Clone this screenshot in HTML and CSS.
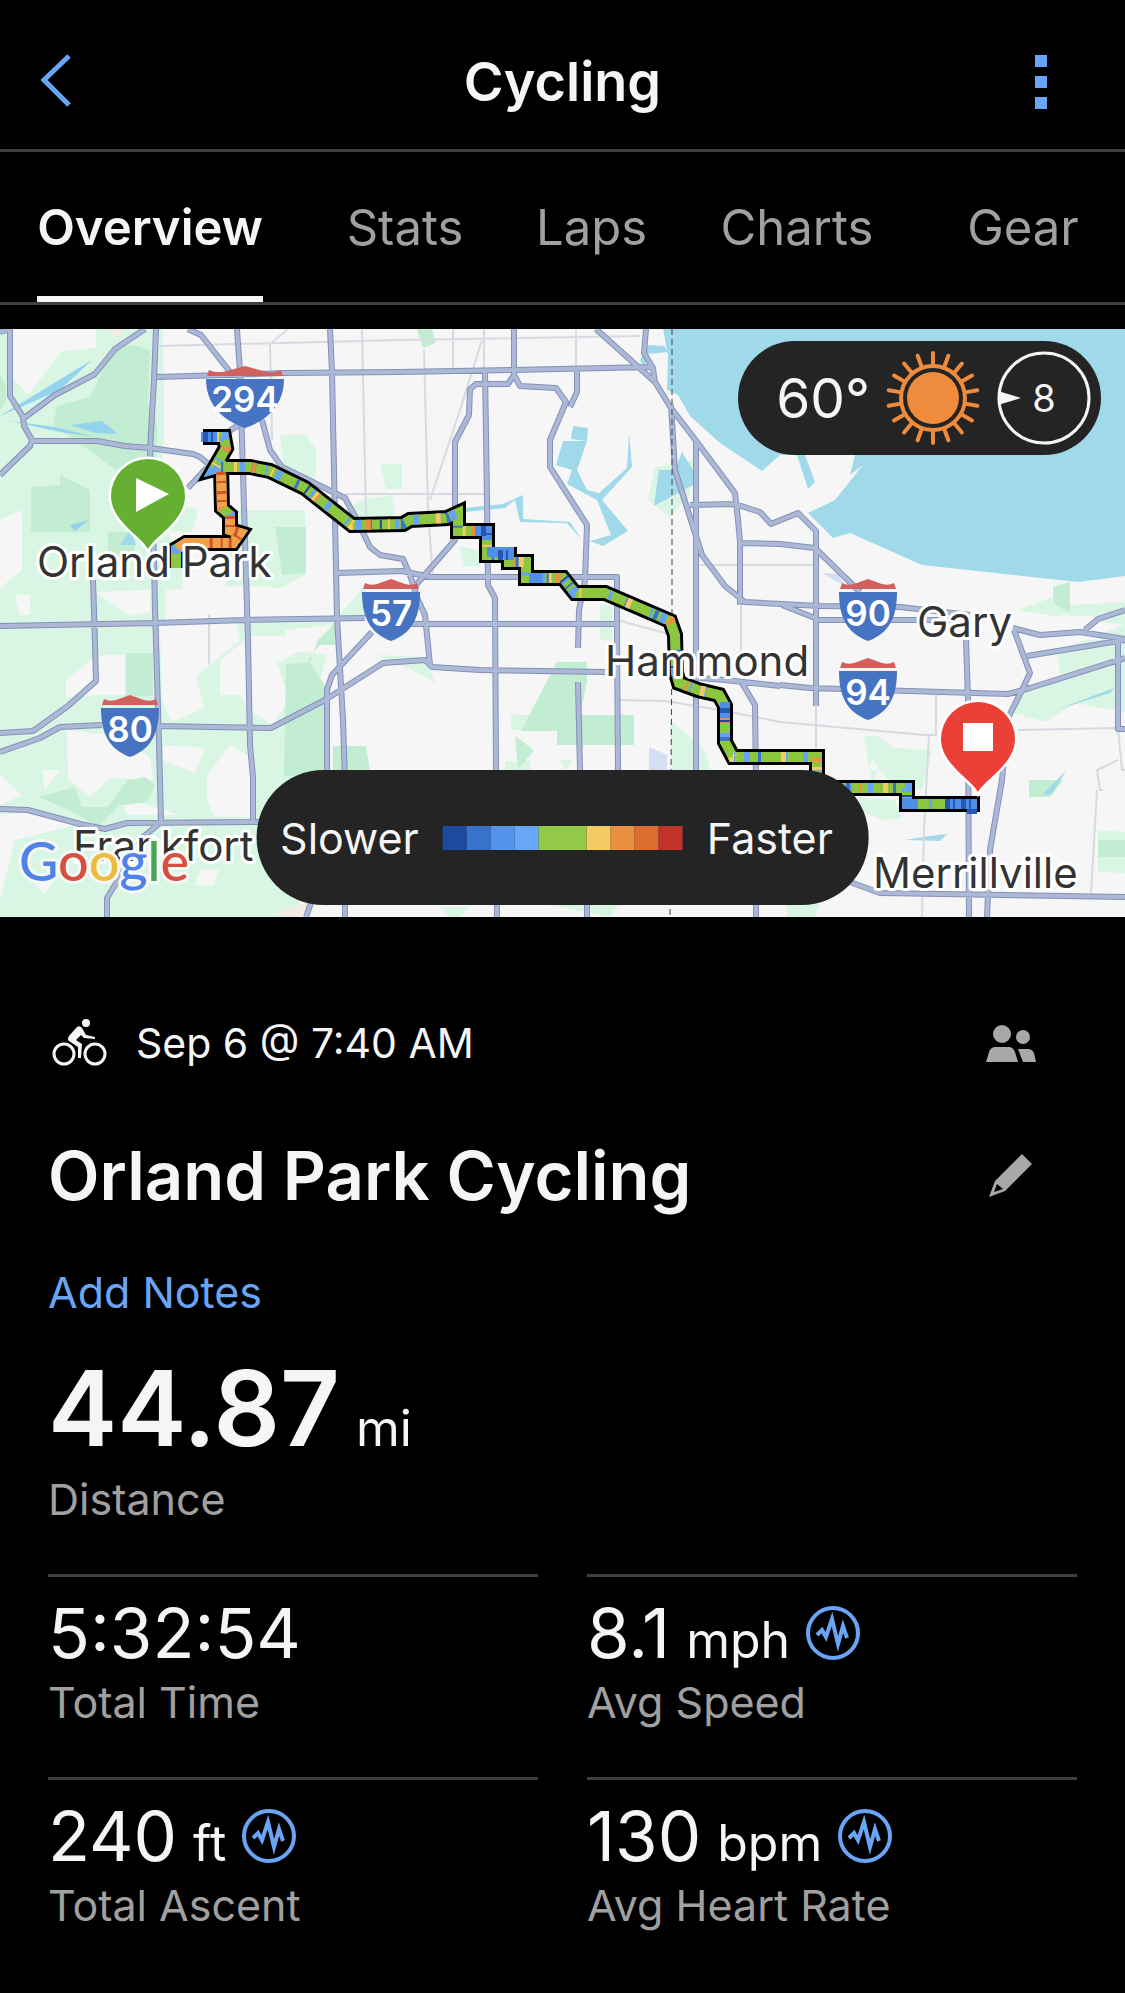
FILE: index.html
```html
<!DOCTYPE html>
<html lang="en">
<head>
  <meta charset="utf-8">
  <meta name="viewport" content="width=device-width, initial-scale=1">
  <title>Cycling</title>
  <link rel="stylesheet" href="styles.css">
</head>
<body>
  <header class="topbar">
    <button type="button" class="icon-button back" aria-label="Back">
      <svg width="32" height="54" viewBox="0 0 32 54"><path d="M29 2 L4 26 L29 51"/></svg>
    </button>
    <h1>Cycling</h1>
    <button type="button" class="icon-button more" aria-label="More">
      <svg width="12" height="56" viewBox="0 0 12 56"><path d="M0 2h12v12H0zM0 23h12v12H0zM0 44h12v12H0z"/></svg>
    </button>
  </header>

  <nav class="tabs">
    <a href="#overview" class="active" aria-current="page">Overview</a>
    <a href="#stats">Stats</a>
    <a href="#laps">Laps</a>
    <a href="#charts">Charts</a>
    <a href="#gear">Gear</a>
  </nav>

  <section class="map">
    <svg class="map-canvas" viewBox="0 329 1125 588" role="img" aria-label="Route map">
      <defs>
        <path id="roads" d="M0 332 L10 329 V396 L23 417 L24 426 L32 440 L30 446 L0 475
          M145 329 L115 349 L95 374 L55 395 L24 418
          M32 441 H97 L125 446 L150 448 L193 454 L200 457 L212 467 M212 462 L188 488
          M156 329 L154 380 L150 450 L154 560 L155 610 L157 675 L159 743 L161 822 L142 838 L118 880 L107 898 V917
          M188 329 L201 335 L230 372 M237 329 L240 372 L242 440 L245 540 L248 640 L250 745 L253 777 V822
          M157 377 L285 373 L400 372 L513 370 L652 367 M240 424 L228 432
          M330 329 L332 372 L337 618 L343 720 L345 780 V917
          M262 420 L270 450 L282 467 L345 498 L357 520 L370 547 L380 555 L403 559 L410 575 L418 600 L425 615 L430 665
          M337 573 L402 571 L430 577 H617 V640 L618 770
          M93 580 L94 610 L96 681 L68 706 L33 731 L0 733
          M0 626 L155 623 L245 620 L365 618 M410 624 H617
          M0 752 L40 738 L60 727 L102 725 M157 726 L271 728 L325 700 L383 663 L425 660 L432 667 L480 670 L605 672 M780 686 L725 680 L700 678
          M372 632 L332 675 L327 690 V780 M312 900 L306 917
          M0 809 L28 810 L80 824 L105 829 L127 823 L260 822
          M514 329 V375 L508 384 H476 L470 389 L469 415 L455 442 V540 L415 586
          M514 375 L520 386 L556 388 L566 402 L550 440 V467 L587 525 L585 580 L579 610 L578 648 M578 682 L580 770 M587 890 V917
          M485 370 L487 500 L488 585 L495 598 L496 770 L497 917
          M577 368 V392 L570 407
          M596 329 L655 382 L671 408 L697 442 L735 493 L738 520 L740 542 V605
          M646 329 L644 353 L653 368 L655 384
          M671 405 L675 470 L702 555 L725 586 L745 602 L820 606 L900 607 L970 615
          M696 442 V780
          M690 505 L735 504 L760 512 L771 524 L798 513 L816 531 V706
          M741 543 L780 544 L815 548 M817 550 L860 592
          M782 605 L820 620 H960
          M742 683 L755 705 L756 780 M756 890 V917
          M780 685 L810 688 L1008 694 L1030 688 L1125 658
          M966 640 L968 700 L969 917
          M1013 628 L1040 635 L1080 632 L1125 639
          M1014 630 L1030 673 L1022 690 L1008 718 L1002 780 L990 850 L987 917
          M1027 656 L1125 640 M1085 630 L1098 619 L1125 610
          M1118 640 V729 H1125
          M850 882 L880 893 L1125 897"/>
        <path id="route" d="M203 437 H224 L226 448 L214 469 L221 467 L222 508 L230 515 V530 L240 533 L233 543 L186 543 L176 549 V568
          M221 467 H250 L270 471 L305 488 L352 525 L403 524 L410 520 L447 518 L458 513 V531 H487 V555 H509 V562 H526 V578 H563 L575 593 H605 L670 621 L675 635 L676 673 L679 683 L698 690 L719 695 L725 706 V742 L733 757 H817 V788 H907 V804 H972 V812"/>
        <path id="plate-top" d="M-26 -28 Q-21 -25 -14 -27 L0 -32 L14 -27 Q21 -25 26 -28 L28 -22 H-28z"/>
        <path id="plate" d="M-29 -19 H29 C29 5 22 22 0 30 C-22 22 -29 5 -29 -19z"/>
        <path id="pin" d="M0 53 C-7 40 -37 25 -37 0 A37 37 0 0 1 37 0 C37 25 7 40 0 53z"/>
      </defs>

      <rect class="land" x="0" y="329" width="1125" height="588"/>

      <g class="park">
        <path d="M0 329 H163 L165 470 L146 500 L200 504 L190 540 L180 600 L205 618 L336 618 L300 760 V917 H0z"/>
        <path d="M280 435 L305 434 L316 450 V490 L345 510 L362 500 L392 495 L395 515 L350 519 L285 480z"/>
        <path d="M380 464 H402 V489 H386z M235 510 H305 V575 L276 590 H225z M337 618 L365 585 V618z M460 546 L480 551 V566 H464z"/>
        <path d="M655 467 L693 460 L690 495 L670 517 L648 500z M670 720 L705 750 L712 775 H672z M511 715 H560 V730 H511z"/>
        <path d="M1018 610 L1053 597 V587 L1070 582 V605 L1125 602 V625 L1060 617z M1058 650 L1125 625 V712 L1075 703 L1046 722 L1008 712 L1025 690 L1060 680z"/>
        <path d="M864 736 H878 L893 748 L932 750 L922 790 L895 785 L878 770 L872 785z M858 797 L895 800 L902 818 L885 820 L860 812z M1098 830 L1125 832 V873 L1098 872z M787 905 L820 903 L815 917 H787z"/>
        <path d="M377 655 L425 657 L435 683 L412 670z M505 762 L530 760 V772 H505z M560 760 H572 L565 772z M440 907 H470 L460 917 H450z M550 905 L620 903 L610 917z M600 605 H612 V640 H600z"/>
      </g>

      <g class="land">
        <path d="M12 329 H96 V348 L62 351 L28 395 L10 375z M85 418 L125 425 V440 H95z M166 410 H260 V500 L200 510 L160 500z"/>
        <path d="M0 520 L22 510 V570 L0 588z M166 530 L212 535 L205 545 H175z M166 590 L240 586 L335 590 V617 L165 622z M95 592 L150 590 V612 L130 616z M15 595 H30 V615 H20z"/>
        <path d="M160 622 L235 618 L240 640 L196 676 L204 708 L172 722 L162 700z M220 660 L250 636 H295 L302 650 L277 663 L286 690 V705 L272 725 L250 710 L240 695 H220z"/>
        <path d="M106 655 H125 V695 H98 L66 697 V680 L90 660z M67 730 L110 735 L150 757 L153 780 L110 778 L90 797 L68 780z M163 745 L205 748 L195 773 L163 760z M207 775 L230 745 L250 757 V817 H215 L207 800z"/>
        <path d="M0 775 L22 795 L0 805z M0 815 L35 812 L75 825 L15 840 L0 900z M42 770 L60 770 L45 790z M124 805 L140 803 L180 815 H127z M200 870 L219 869 L214 885 H195z M30 878 L60 870 L45 895z"/>
        <path d="M285 630 L330 625 L336 632 L330 655 L285 650z M348 665 L395 672 V770 H370 L366 746 H345z M1060 615 L1100 617 V640 H1060z M869 770 L872 759 L880 772 H890z"/>
      </g>

      <g class="woods">
        <path d="M57 406 L90 397 L115 345 L137 346 L150 350 L148 405 L157 424 V471 L116 470 L75 440 L53 425z"/>
        <path d="M31 487 L60 485 L60 475 L90 490 V532 H31z M0 375 L6 385 V400 L0 410z M108 532 H135 V556 H108z M275 527 H306 V573 L282 575z"/>
        <path d="M126 653 H153 V696 H126z M286 664 L310 662 L318 640 L335 623 V645 H320 L308 660 L328 690 V776 H284z M333 746 H366 L370 770 H333z"/>
        <path d="M38 797 L75 787 L82 807 H108 L120 790 L128 780 L145 777 L155 785 L147 802 L120 805 L98 827 L73 812z"/>
        <path d="M417 329 H432 L436 343 L423 348z M557 662 H587 V682 L580 715 H634 V745 H557 V731 H521z M515 736 L534 750 L518 770z"/>
        <path d="M1053 597 V587 L1070 582 V612 L1055 605z M1098 840 H1125 V857 H1098z M1029 780 H1063 L1050 797 H1029z"/>
      </g>

      <g class="water">
        <path d="M663 329 L666 345 L668 355 L667 390 L678 395 L690 416 L720 443 L762 471 L780 455 H797 L808 489 L815 482 L805 455 H855 L850 475 L863 465 L835 500 L808 513 L833 538 L850 533 L922 565 L1078 582 L1125 576 V329z"/>
        <path d="M573 426 L588 428 L587 441 L571 439z M563 441 L587 441 L577 470 L587 490 L599 493 L627 468 L629 433 L632 467 L602 500 L628 531 L603 546 L590 541 L611 535 L597 500 L567 484 L572 470 L556 465z"/>
        <path d="M465 508 L503 504 L523 495 L523 519 L570 522 L582 540 L567 523 L520 522 L515 500 L505 508 L465 512z M659 470 L675 470 L682 452 L693 470 V485 L654 506z"/>
        <path d="M648 345 L664 346 L668 352 L648 354 L644 370 L640 360z"/>
        <path d="M905 840 L930 836 L947 834 L940 841z M1042 795 L1066 771 L1052 794z M1056 710 L1114 688 L1110 693z M120 545 L130 530 L136 545z"/>
      </g>
      <g class="stream">
        <path d="M0 416 L92 360 L60 390z M10 421 L55 427 L95 437 L60 432z M70 425 L102 421 L118 434 L95 433z M70 525 L89 520 L75 531z"/>
      </g>
      <path class="airport" d="M649 747 L667 755 V772 H649z M822 573 L838 574 L845 586z"/>
      <path class="sand" d="M106 329 H125 L117 337z M272 915 L308 902 L302 917z"/>

      <path class="minor-road" d="M160 346 L400 340 L640 336 M288 329 L270 344 L272 440 M362 329 L366 515 M424 350 L428 510 L433 580 M482 340 L460 410 L430 500 M453 329 V368 M484 329 V372 M576 329 V368
        M345 494 H486 M700 565 H815 M741 605 V660 M618 700 L665 701 L720 710 L780 722 L925 735 H936 V690 M929 735 L924 830 L922 917 M816 706 V757 M1018 730 L1118 728 L1122 770 H1125 M1118 760 L1097 770 L1100 790 H1103 M1097 790 L1091 893 M617 620 L680 637 M209 615 V665"/>

      <use href="#roads" class="road-edge"/>
      <use href="#roads" class="road"/>
      <path class="border" d="M672 329 V640 L670 917"/>

      <use href="#route" class="route-outline"/>
      <use href="#route" class="route"/>
      <use href="#route" class="route sky"/>
      <use href="#route" class="route blue"/>
      <use href="#route" class="route yellow"/>
      <use href="#route" class="route orange"/>
      <use href="#route" class="route navy"/>
      <!-- fast stretch near the start -->
      <path class="route hot" d="M221 472 L222 506 M230 516 V530 L240 533 L233 543 L186 543 L178 548"/>
      <path class="route hotter" d="M221 472 L222 506 M230 516 V530 L240 533 L233 543 L208 543"/>
      <!-- slow stretches -->
      <path class="route slow" d="M201 437 H217 M475 531 H487 V540 M487 552 H509 V560 M529 578 H542 M725 702 V718 M907 798 V804 H918 M945 804 H972 V812"/>
      <path class="route slower" d="M203 437 H217 M481 531 H487 V536 M498 555 H509 V560 M725 708 V716 M945 804 H972 V814"/>

      <g class="labels">
        <text x="37" y="577">Orland Park</text>
        <text x="605" y="676">Hammond</text>
        <text x="917" y="637">Gary</text>
        <text x="873" y="888">Merrillville</text>
        <text x="73" y="861">Frankfort</text>
      </g>

      <g class="shield">
        <g transform="translate(245 398)">
          <path class="plate-top" d="M-36 -28 Q-28 -24 -18 -27 L0 -32 L18 -27 Q28 -24 36 -28 L38 -22 H-38z"/>
          <path class="plate" d="M-39 -19 H39 C39 5 24 22 0 30 C-24 22 -39 5 -39 -19z"/>
          <text y="14">294</text>
        </g>
        <g transform="translate(130 727)"><use href="#plate-top" class="plate-top"/><use href="#plate" class="plate"/><text y="15">80</text></g>
        <g transform="translate(391 611)"><use href="#plate-top" class="plate-top"/><use href="#plate" class="plate"/><text y="15">57</text></g>
        <g transform="translate(868 611)"><use href="#plate-top" class="plate-top"/><use href="#plate" class="plate"/><text y="15">90</text></g>
        <g transform="translate(868 690)"><use href="#plate-top" class="plate-top"/><use href="#plate" class="plate"/><text y="15">94</text></g>
      </g>

      <g transform="translate(148 496)">
        <use href="#pin" class="pin start"/>
        <path class="pin-mark" d="M-12 -18 L21 -2 L-12 16z"/>
      </g>
      <g transform="translate(978 739)">
        <use href="#pin" class="pin end"/>
        <path class="pin-mark" d="M-15 -16 H15 V12 H-15z"/>
      </g>

      <text class="google" x="19" y="881"><tspan class="g-blue">G</tspan><tspan class="g-red">o</tspan><tspan class="g-yellow">o</tspan><tspan class="g-blue">g</tspan><tspan class="g-green">l</tspan><tspan class="g-red">e</tspan></text>
    </svg>

    <div class="weather">
      <span class="temperature">60°</span>
      <svg class="sun" width="94" height="94" viewBox="-47 -47 94 94">
        <circle class="sun-core" r="26"/>
        <circle class="sun-ring" r="32"/>
        <g class="sun-rays">
          <path d="M0 -34V-45M0 34V45"/>
          <path d="M0 -34V-45M0 34V45" transform="rotate(20)"/>
          <path d="M0 -34V-45M0 34V45" transform="rotate(40)"/>
          <path d="M0 -34V-45M0 34V45" transform="rotate(60)"/>
          <path d="M0 -34V-45M0 34V45" transform="rotate(80)"/>
          <path d="M0 -34V-45M0 34V45" transform="rotate(100)"/>
          <path d="M0 -34V-45M0 34V45" transform="rotate(120)"/>
          <path d="M0 -34V-45M0 34V45" transform="rotate(140)"/>
          <path d="M0 -34V-45M0 34V45" transform="rotate(160)"/>
        </g>
      </svg>
      <svg class="wind" width="94" height="94" viewBox="-47 -47 94 94">
        <circle r="45"/>
        <path d="M-46 -7 L-23 0 L-46 7z"/>
        <text y="14">8</text>
      </svg>
    </div>

    <div class="legend">
      <span>Slower</span>
      <span class="scale">
        <i class="s1"></i><i class="s2"></i><i class="s3"></i><i class="s4"></i><i class="s5"></i><i class="s6"></i><i class="s7"></i><i class="s8"></i><i class="s9"></i>
      </span>
      <span>Faster</span>
    </div>
  </section>

  <main class="summary">
    <div class="row date-row">
      <svg class="rider" width="56" height="50" viewBox="0 0 56 50">
        <g class="wheels"><circle cx="12" cy="36" r="10"/><circle cx="43" cy="36" r="10"/></g>
        <circle cx="34" cy="5" r="4"/>
        <path d="M25 9 Q28 7 30 10 L34 17 L43 19 V21 L32 20 L29 17 L24 22 L30 26 L29 40 H26 L26 29 L17 23 Q15 21 17 18z"/>
      </svg>
      <span class="date">Sep 6 @ 7:40 AM</span>
      <button type="button" class="icon-button" aria-label="Privacy">
        <svg width="52" height="40" viewBox="0 0 52 40"><circle cx="17" cy="11" r="9"/><circle cx="38" cy="14" r="7"/><path d="M1 39 L4 29 Q6 24 10 24 H24 Q28 24 30 29 L33 39z M33 26 H43 Q47 26 49 30 L51 39 H38z"/></svg>
      </button>
    </div>

    <div class="row title-row">
      <h2>Orland Park Cycling</h2>
      <button type="button" class="icon-button" aria-label="Edit name">
        <svg width="44" height="44" viewBox="0 0 44 44"><path fill-rule="evenodd" d="M33 0 L43 10 L16 37 L0 43 L6 27z M8 30 L5 38 L14 35z"/></svg>
      </button>
    </div>

    <button type="button" class="notes">Add Notes</button>

    <div class="distance">
      <div class="value">44.87 <span class="unit">mi</span></div>
      <div class="label">Distance</div>
    </div>

    <div class="stats">
      <div class="stat">
        <div class="value">5:32:54</div>
        <div class="label">Total Time</div>
      </div>
      <div class="stat">
        <div class="value">8.1 <span class="unit">mph</span>
          <button type="button" class="icon-button pulse" aria-label="Speed chart"><svg width="54" height="54" viewBox="0 0 54 54"><circle cx="27" cy="27" r="25"/><path d="M11 29 L16 24 L20 31 L26 13 L32 38 L37 20 L41 32"/></svg></button>
        </div>
        <div class="label">Avg Speed</div>
      </div>
      <div class="stat">
        <div class="value">240 <span class="unit">ft</span>
          <button type="button" class="icon-button pulse" aria-label="Ascent chart"><svg width="54" height="54" viewBox="0 0 54 54"><circle cx="27" cy="27" r="25"/><path d="M11 29 L16 24 L20 31 L26 13 L32 38 L37 20 L41 32"/></svg></button>
        </div>
        <div class="label">Total Ascent</div>
      </div>
      <div class="stat">
        <div class="value">130 <span class="unit">bpm</span>
          <button type="button" class="icon-button pulse" aria-label="Heart rate chart"><svg width="54" height="54" viewBox="0 0 54 54"><circle cx="27" cy="27" r="25"/><path d="M11 29 L16 24 L20 31 L26 13 L32 38 L37 20 L41 32"/></svg></button>
        </div>
        <div class="label">Avg Heart Rate</div>
      </div>
    </div>
  </main>
</body>
</html>
```
FILE: styles.css
```css
body {
  margin: 0;
  background-color: #000;
  color: #f5f5f5;
  font-family: Inter, "Liberation Sans", sans-serif;
}

button {
  font-family: inherit;
  background: none;
  border: none;
  padding: 0;
  cursor: pointer;
}

svg {
  display: block;
}

.icon-button {
  display: flex;
  fill: #a8a8a8;
}

/* Header */
.topbar {
  display: grid;
  grid-template-columns: 100px 1fr 100px;
  align-items: center;
  height: 136px;
  padding-top: 13px;
  border-bottom: 3px solid #3e3e3e;
}

.topbar h1 {
  margin: 0;
  font-size: 54px;
  font-weight: 600;
  text-align: center;
}

.back {
  padding-left: 40px;
  fill: none;
  stroke: #6aa5f5;
  stroke-width: 5;
}

.more {
  justify-self: end;
  padding-right: 78px;
  fill: #6aa5f5;
}

/* Tabs */
.tabs {
  display: grid;
  grid-template-columns: 300fr 210fr 163fr 248fr 204fr;
  justify-items: center;
  border-bottom: 3px solid #3e3e3e;
}

.tabs a {
  box-sizing: border-box;
  height: 150px;
  line-height: 152px;
  color: #a0a0a0;
  font-size: 49px;
  text-decoration: none;
}

.tabs .active {
  color: #f5f5f5;
  font-weight: 600;
  border-bottom: 6px solid #f5f5f5;
}

/* Map */
.map {
  position: relative;
  margin-top: 24px;
}

.map-canvas {
  width: 100%;
  height: auto;
}

.land {
  fill: #f6f6f6;
}

.park {
  fill: #d9f6e4;
}

.woods {
  fill: #c3edd2;
}

.water {
  fill: #9fd9ea;
}

.stream {
  fill: #94d3ee;
}

.airport {
  fill: #d5def2;
}

.sand {
  fill: #f6ebe2;
}

.minor-road {
  fill: none;
  stroke: #d8dae3;
  stroke-width: 2;
}

.road-edge,
.road {
  fill: none;
  stroke-linejoin: round;
}

.road-edge {
  stroke: #8590b8;
  stroke-width: 6;
}

.road {
  stroke: #abb8d6;
  stroke-width: 4;
}

.border {
  fill: none;
  stroke: #444;
  stroke-width: 1;
  stroke-dasharray: 6 4;
}

.route-outline {
  fill: none;
  stroke: #000;
  stroke-width: 16;
}

.route {
  fill: none;
  stroke: #8dc63f;
  stroke-width: 10;
}

.route.sky {
  stroke: #64a3f5;
  stroke-dasharray: 3 16 5 21 2 9 6 34;
}

.route.blue {
  stroke: #3872cb;
  stroke-dasharray: 2 29 4 43 3 22 2 61;
}

.route.yellow {
  stroke: #f3cb62;
  stroke-dasharray: 0 13 3 35 2 47 5 28;
}

.route.orange {
  stroke: #ea8e3f;
  stroke-dasharray: 0 31 4 68 2 57 5 90;
}

.route.navy {
  stroke: #1d4a9c;
  stroke-dasharray: 0 90 2 84 2 73;
}

.route.hot {
  stroke: #f0a04a;
}

.route.hotter {
  stroke: #d4512a;
  stroke-dasharray: 3 6 2 8;
}

.route.slow {
  stroke: #4f8fe8;
}

.route.slower {
  stroke: #2458b4;
  stroke-dasharray: 5 3 2 6;
}

.labels text {
  fill: #333;
  stroke: #fff;
  stroke-width: 6;
  stroke-linejoin: round;
  paint-order: stroke;
  font-size: 42px;
}

.plate-top {
  fill: #d1605e;
}

.plate {
  fill: #4674c2;
}

.shield text {
  fill: #fff;
  font-size: 35px;
  font-weight: 600;
  text-anchor: middle;
}

.pin {
  stroke: #fff;
  stroke-width: 5;
  paint-order: stroke;
}

.pin.start {
  fill: #65b032;
}

.pin.end {
  fill: #ea4037;
}

.pin-mark {
  fill: #fff;
}

.google {
  font-family: Lato, sans-serif;
  font-size: 54px;
  font-weight: 500;
  stroke: #f5f8f5;
  stroke-width: 6;
  stroke-linejoin: round;
  paint-order: stroke;
}

.g-blue {
  fill: #4f83ea;
}

.g-red {
  fill: #d5503f;
}

.g-yellow {
  fill: #eebb3f;
}

.g-green {
  fill: #48a659;
}

/* Weather pill over the map */
.weather {
  position: absolute;
  top: 12px;
  right: 24px;
  box-sizing: border-box;
  display: flex;
  align-items: center;
  height: 114px;
  padding: 0 10px 0 38px;
  border-radius: 57px;
  background-color: #242424;
}

.temperature {
  font-size: 55px;
}

.sun {
  margin: 0 17px 0 16px;
}

.sun-core {
  fill: #ef8b3c;
}

.sun-ring,
.sun-rays {
  fill: none;
  stroke: #ef8b3c;
  stroke-width: 4;
  stroke-linecap: round;
}

.wind circle {
  fill: none;
  stroke: #f5f5f5;
  stroke-width: 3;
}

.wind path,
.wind text {
  fill: #f5f5f5;
}

.wind text {
  font-size: 38px;
  text-anchor: middle;
}

/* Speed legend over the map */
.legend {
  position: absolute;
  bottom: 12px;
  left: 50%;
  transform: translateX(-50%);
  display: flex;
  align-items: center;
  gap: 24px;
  height: 135px;
  padding: 0 36px 0 24px;
  border-radius: 67px;
  background-color: #242424;
  font-size: 43px;
}

.scale {
  display: flex;
}

.scale i {
  width: 24px;
  height: 24px;
}

.s1 { background-color: #1d4a9c; }
.s2 { background-color: #3872cb; }
.s3 { background-color: #5494eb; }
.s4 { background-color: #68a6f8; }
.s6 { background-color: #f3cb62; }
.s7 { background-color: #ea8e3f; }
.s8 { background-color: #dc6d2f; }
.s9 { background-color: #c0322a; }

/* average pace takes two steps */
.scale .s5 {
  width: 48px;
  background-color: #92c947;
}

/* Summary */
.summary {
  padding: 98px 48px 0;
}

.row {
  display: flex;
  align-items: center;
}

.row .icon-button {
  margin-left: auto;
  margin-right: 40px;
}

.rider {
  margin: 0 28px 0 4px;
  fill: #f5f5f5;
}

.wheels {
  fill: none;
  stroke: #f5f5f5;
  stroke-width: 3;
}

.date {
  font-size: 41px;
  line-height: 56px;
}

.title-row {
  margin-top: 62px;
}

.title-row .icon-button {
  margin-right: 44px;
}

.title-row h2 {
  margin: 0;
  font-size: 67px;
  font-weight: 600;
  line-height: 86px;
}

.notes {
  display: block;
  margin-top: 45px;
  color: #6aa5f5;
  font-size: 43px;
  line-height: 56px;
}

.value {
  display: flex;
  align-items: baseline;
  gap: 16px;
  font-size: 69px;
  line-height: 72px;
}

.unit {
  font-size: 50px;
  line-height: 50px;
}

.label {
  margin-top: 5px;
  color: #a0a0a0;
  font-size: 43px;
  line-height: 56px;
}

.distance {
  margin: 32px 0 47px;
}

.distance .value {
  font-size: 104px;
  font-weight: 600;
  line-height: 112px;
}

.distance .unit {
  font-weight: 400;
}

.distance .label {
  margin-top: 7px;
}

.stats {
  display: grid;
  grid-template-columns: 1fr 1fr;
  column-gap: 49px;
}

.stat {
  padding: 20px 0 47px;
  border-top: 3px solid #3e3e3e;
}

.pulse {
  align-self: center;
  fill: none;
  stroke: #6aa5f5;
  stroke-width: 4;
}
```
